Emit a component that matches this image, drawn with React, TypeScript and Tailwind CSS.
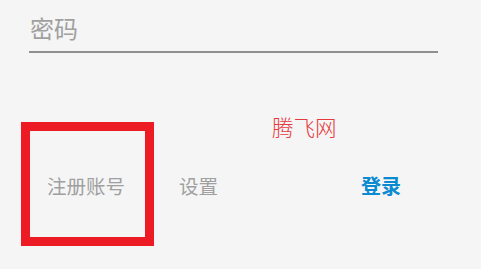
import React from 'react';

const App: React.FC = () => {
  return (
    <div
      className="relative w-[481px] h-[269px] bg-[#f5f5f5] overflow-hidden"
      style={{ fontFamily: '"Noto Sans CJK SC", "Noto Sans", sans-serif' }}
    >
      {/* Password field */}
      <div className="pl-[29px] pt-[12px] w-[438px]">
        <div className="text-[24px] leading-[32px] text-[#a0a0a0] pl-[1px]">密码</div>
        <div className="mt-[7px] h-[2px] bg-[#8f8f8f]"></div>
      </div>

      {/* Buttons row */}
      <div className="flex items-center mt-[121px] text-[19.5px] leading-[24px]">
        <span className="ml-[47px] text-[#a0a0a0]">注册账号</span>
        <span className="ml-[54px] text-[#a0a0a0]">设置</span>
        <span className="ml-[143px] text-[20px] font-bold text-[#0a8ad0]">登录</span>
      </div>

      {/* Watermark */}
      <div className="absolute left-[272px] top-[113px] text-[21.5px] leading-[28px] font-light text-[#e53a40]">
        腾飞网
      </div>

      {/* Highlight box */}
      <div className="absolute left-[21px] top-[122px] w-[133px] h-[124px] border-[9px] border-[#ed1c24]"></div>
    </div>
  );
};

export default App;
